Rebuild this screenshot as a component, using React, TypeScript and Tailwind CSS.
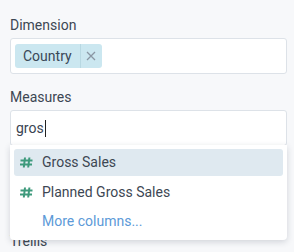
function HashIcon() {
  return (
    <svg width="13" height="11" viewBox="0 0 13 11" fill="none" stroke="#3e9a7c" strokeWidth="2">
      <path d="M5 0.5L3.8 10.5M9.4 0.5L8.2 10.5M0.5 3.6H12.5M0 7.6H12" />
    </svg>
  )
}

export default function App() {
  return (
    <div className="min-h-[252px] bg-[#f7f8fa] px-[10px] pt-[15px] font-['Roboto',sans-serif] text-[14px] text-[#3d4753] overflow-hidden">
      <div className="leading-[20px]">Dimension</div>
      <div className="mt-[3px] h-[36px] w-[277px] rounded-[3px] border border-[#dde2e8] bg-white px-[4px] flex items-center">
        <div className="flex h-[24px] items-center rounded-[3px] bg-[#cbe7f0]">
          <span className="pl-[8px] pr-[8px] leading-[24px] text-[#3a4757]">Country</span>
          <span className="h-[24px] w-px bg-[#b8d8e2]" />
          <span className="flex w-[21px] justify-center text-[#8a96a3]">
            <svg width="10" height="10" viewBox="0 0 10 10" fill="none" stroke="currentColor" strokeWidth="1.3">
              <path d="M1 1L9 9M9 1L1 9" />
            </svg>
          </span>
        </div>
      </div>

      <div className="mt-[13px] leading-[20px]">Measures</div>
      <div className="relative mt-[3px]">
        <div className="h-[36px] w-[277px] rounded-[3px] border border-[#dde2e8] bg-white px-[5px] flex items-center">
          <span className="text-[#3a4452]">gros</span>
          <span className="ml-px h-[17px] w-px bg-[#222]" />
        </div>
        <div className="absolute left-0 top-[35px] z-10 w-[277px] rounded-b-[4px] bg-white px-[4px] pt-[4px] pb-[5px] shadow-[0_2px_6px_rgba(40,50,70,0.18)]">
          <div className="flex h-[27px] items-center rounded-[3px] bg-[#dfe9f0] pl-[6px]">
            <span className="w-[22px] flex"><HashIcon /></span>
            <span>Gross Sales</span>
          </div>
          <div className="mt-[3px] flex h-[27px] items-center pl-[6px]">
            <span className="w-[22px] flex"><HashIcon /></span>
            <span>Planned Gross Sales</span>
          </div>
          <div className="mt-[1px] flex h-[28px] items-center pl-[28px] text-[#5c9ad8]">More columns...</div>
        </div>
      </div>

      <div className="mt-[85px] leading-[20px]">Trellis</div>
    </div>
  )
}
